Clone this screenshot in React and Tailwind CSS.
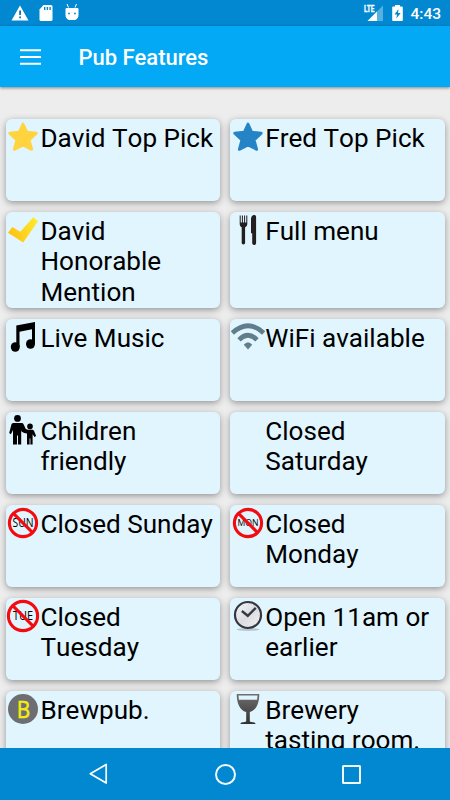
function TopPickStar({ color }) {
  return (
    <svg viewBox="0 0 30 30" className="h-[30px] w-[30px]">
      <path
        d="M15 2 L18.7 10.1 L28.3 11.2 L21.1 17.9 L23.7 27.4 L15 23.1 L6.3 27.4 L8.9 17.9 L1.7 11.2 L11.3 10.1 Z"
        fill={color}
        stroke={color}
        strokeWidth="2.8"
        strokeLinejoin="round"
      />
    </svg>
  )
}

function Check() {
  return (
    <svg viewBox="0 0 30 30" className="h-[30px] w-[30px]">
      <defs>
        <linearGradient id="check" x1="0" y1="0.6" x2="1" y2="0.3">
          <stop offset="0" stopColor="#fdc010" />
          <stop offset="1" stopColor="#ffe92f" />
        </linearGradient>
      </defs>
      <path d="M0 17.8 L4.3 12 L12.3 16.8 L25.3 2.2 L30 6.2 L15.2 27.5 Z" fill="url(#check)" />
    </svg>
  )
}

function Cutlery() {
  return (
    <svg viewBox="0 0 30 30" className="h-[30px] w-[30px]" fill="#231f20">
      <path d="M6.7.5h1v7h1.2v-7h1v7h1.2v-7h1v7h1.2v-7h1v8.6c0 1.6-.9 2.6-2.2 3.1v15.6c0 1-.8 1.7-1.7 1.7s-1.7-.7-1.7-1.7V12.2c-1.3-.5-2-1.5-2-3.1z" />
      <path d="M18 4c0-2.3 1.2-4 3.2-4 1.3 0 1.9.9 1.9 2v26c0 1.2-.8 2-1.9 2s-2-.8-2-2V18.2H18z" />
    </svg>
  )
}

function MusicNote() {
  return (
    <svg viewBox="0 0 30 30" className="h-[30px] w-[30px]">
      <path d="M8.3 3.5 L27 0 V22 H24 V7.2 L11.5 9.7 V25 H8.3 Z" />
      <ellipse cx="7.3" cy="25" rx="4.5" ry="4.8" />
      <ellipse cx="22.5" cy="22" rx="4.5" ry="4.8" />
    </svg>
  )
}

function Wifi() {
  return (
    <svg viewBox="0 0 34 30" className="-ml-0.5 h-[30px] w-[34px] max-w-none" fill="none" stroke="#607d8b" strokeWidth="4.7">
      <path d="M1.3 11 Q17 -3.6 32.7 11" />
      <path d="M8 17.8 Q17 8.9 26 17.8" />
      <path d="M12.8 22.8 Q17 17.8 21.2 22.8 L17 27.4 Z" fill="#607d8b" stroke="none" />
    </svg>
  )
}

function Family() {
  return (
    <svg viewBox="0 0 30 30" className="h-[30px] w-[30px]">
      <circle cx="9.5" cy="3.4" r="3.4" />
      <circle cx="22" cy="11.4" r="2.8" />
      <path d="M5.5 8h8c1.3 0 1.9.7 2.3 1.7l2 4.3 2.2.8h4c1.2 0 1.8.5 2.2 1.5l1.9 4.6-1.7 1-1.8-2.7V29.6h-2.2v-6h-.8v6h-2.6V18.5l-2.7-.6-2.5-1.2-.6-1.5V29.6H10v-9.2H9v9.2H5V15l-2.1 4.2L1.2 18l2-7.8C3.6 8.7 4.2 8 5.5 8z" />
    </svg>
  )
}

function ClosedDay({ day, large }) {
  const r = large ? 14.6 : 13.6
  const d = r * 0.707
  return (
    <svg viewBox="0 0 30 30" className="h-[30px] w-[30px] overflow-visible">
      <text
        x="15"
        y={day === 'MON' ? 18.2 : 18.8}
        textAnchor="middle"
        textLength={large ? 20 : 21}
        lengthAdjust="spacingAndGlyphs"
        className={day === 'MON' ? 'font-["Open_Sans",sans-serif] text-[9px]' : 'font-["Open_Sans",sans-serif] text-[12px]'}
      >
        {day}
      </text>
      <g fill="none" stroke="#f40b10" strokeWidth="3.1">
        <circle cx="15" cy="15" r={r} />
        <path d={`M${15 - d} ${15 - d} L${15 + d} ${15 + d}`} />
      </g>
    </svg>
  )
}

function Clock() {
  return (
    <svg viewBox="0 0 30 30" className="h-[30px] w-[30px] overflow-visible">
      <defs>
        <linearGradient id="face" x1="0" y1="0" x2="1" y2="1">
          <stop offset="0" stopColor="#fafafa" />
          <stop offset="0.5" stopColor="#dcdde0" />
          <stop offset="1" stopColor="#f4f4f5" />
        </linearGradient>
      </defs>
      <ellipse cx="15" cy="28.5" rx="11.5" ry="1.4" fill="#9fa9ae" opacity="0.6" />
      <circle cx="15" cy="14" r="13" fill="url(#face)" stroke="#343742" strokeWidth="2.2" />
      <circle cx="15" cy="14" r="10.5" fill="none" stroke="#b9bbc2" strokeWidth="0.7" strokeDasharray="0.8 4.7" />
      <path d="M8.8 10 L14.8 14.8 L22.8 6.8" fill="none" stroke="#343b45" strokeWidth="2.4" />
    </svg>
  )
}

function Brewpub() {
  return (
    <div className="flex h-[30px] w-[30px] items-center justify-center rounded-full bg-[#6d6e71] pl-px font-['Noto_Sans',sans-serif] text-[23px] leading-none text-[#f5ec13]">
      <span className="scale-x-90 [-webkit-text-stroke:0.4px_#f5ec13]">B</span>
    </div>
  )
}

function Goblet() {
  return (
    <svg viewBox="0 0 30 30" className="h-[30px] w-[30px]">
      <defs>
        <linearGradient id="goblet" x1="0" y1="0" x2="0" y2="1">
          <stop offset="0" stopColor="#707070" />
          <stop offset="1" stopColor="#303030" />
        </linearGradient>
      </defs>
      <path
        d="M3.7 0h22.6c0 9-3 16.5-9.5 18v9.6c2 .9 5.7.4 5.7 2.4h-15c0-2 3.7-1.5 5.7-2.4V18C6.7 16.5 3.7 9 3.7 0z M5.5 1.5l.4 4.3h18.2l.4-4.3z"
        fill="url(#goblet)"
        fillRule="evenodd"
      />
    </svg>
  )
}

const features = [
  { name: 'David Top Pick', icon: <TopPickStar color="#ffd43f" /> },
  { name: 'Fred Top Pick', icon: <TopPickStar color="#2484c6" /> },
  { name: 'David Honorable Mention', icon: <Check /> },
  { name: 'Full menu', icon: <Cutlery /> },
  { name: 'Live Music', icon: <MusicNote /> },
  { name: 'WiFi available', icon: <Wifi /> },
  { name: 'Children friendly', icon: <Family /> },
  { name: 'Closed Saturday', icon: null },
  { name: 'Closed Sunday', icon: <ClosedDay day="SUN" /> },
  { name: 'Closed Monday', icon: <ClosedDay day="MON" /> },
  { name: 'Closed Tuesday', icon: <ClosedDay day="TUE" large /> },
  { name: 'Open 11am or earlier', icon: <Clock /> },
  { name: 'Brewpub.', icon: <Brewpub /> },
  { name: 'Brewery tasting room.', icon: <Goblet /> },
]

function StatusBar() {
  return (
    <div className="flex h-[26px] shrink-0 items-center justify-between bg-[#0288d1] pr-[9px] pl-[11px] text-white">
      <div className="flex items-center gap-[11px]">
        <svg viewBox="0 0 18 16" className="h-4 w-[18px]">
          <path d="M9 0.5 L17.5 15.5 H0.5 Z" fill="#fff" />
          <path d="M8.2 5.5h1.8v4.5H8.2z M8.2 11.5h1.8v1.8H8.2z" fill="#0277bd" />
        </svg>
        <svg viewBox="0 0 14 16" className="h-4 w-3.5 -translate-x-px">
          <path d="M4.5 0H12q1.5 0 1.5 1.5V14.5q0 1.5-1.5 1.5H2Q.5 16 .5 14.5V4.5z" fill="#fff" />
          <path d="M5 2h1.4v3H5z M7.7 2h1.4v3H7.7z M10.4 2h1.4v3h-1.4z" fill="#0288d1" />
        </svg>
        <svg viewBox="0 0 16 16" className="h-4 w-4 -translate-x-px -translate-y-px">
          <path d="M2 4.5h12v6.5q0 4.5-4 4.5H6q-4 0-4-4.5z M3 0l1.5 3.5M12.5 0l-1.5 3.5" fill="#fff" stroke="#fff" />
          <circle cx="5" cy="9.5" r="0.9" fill="#0288d1" />
          <circle cx="11" cy="9.5" r="0.9" fill="#0288d1" />
        </svg>
      </div>
      <div className="flex items-center">
        <svg viewBox="0 0 20 16" className="h-4 w-5 overflow-visible">
          <path d="M19 0.5V16H3.5z" fill="#58b0e0" />
          <path d="M13 6.5V16H3.5z" fill="#fff" />
          <text x="0" y="7.2" textLength="10.5" lengthAdjust="spacingAndGlyphs" fill="#fff" stroke="#fff" strokeWidth="0.3" className="font-['Roboto',sans-serif] text-[9px] font-bold">
            LTE
          </text>
        </svg>
        <svg viewBox="0 0 11 16" className="ml-2 h-4 w-[11px]">
          <path d="M3 0h5v1.5h2q.8 0 .8.8V15.2q0 .8-.8.8H1q-.8 0-.8-.8V2.3q0-.8.8-.8h2z" fill="#fff" />
          <path d="M6.5 4 L2.5 9.5H5L4.3 13.5 L8.7 8H6z" fill="#0288d1" />
        </svg>
        <span className="ml-[7px] pt-0.5 text-[15.5px] leading-4 font-medium">4:43</span>
      </div>
    </div>
  )
}

function AppBar() {
  return (
    <header className="z-10 flex h-[61px] shrink-0 items-center bg-[#03a9f4] pl-5 text-white shadow-[0_1px_3px_rgba(0,0,0,0.45)]">
      <svg viewBox="0 0 21 16" className="h-4 w-[21px]">
        <path d="M0 1.3h21M0 8h21M0 14.8h21" stroke="#fff" strokeWidth="2" />
      </svg>
      <h1 className="pt-[3px] pl-[37.5px] text-[22px] leading-7 font-medium">Pub Features</h1>
    </header>
  )
}

function NavBar() {
  return (
    <nav className="flex h-[52px] shrink-0 items-center justify-between bg-[#0288d1] pr-[89px] pl-[88px]">
      <svg viewBox="0 0 22 24" className="h-6 w-[22px]">
        <path d="M18.2 2.5V21L2.3 11.8z" fill="none" stroke="#fff" strokeWidth="1.7" strokeLinejoin="round" />
      </svg>
      <div className="mr-0.5 h-[21px] w-[21px] rounded-full border-2 border-white/95" />
      <div className="h-[19px] w-[19px] rounded-[1.5px] border-2 border-white/95" />
    </nav>
  )
}

export default function App() {
  return (
    <div className="flex h-[800px] w-[450px] flex-col overflow-hidden bg-[#ededed] font-['Roboto',sans-serif]">
      <StatusBar />
      <AppBar />
      <main className="min-h-0 flex-1 overflow-hidden px-[5.5px] pt-8">
        <div className="grid grid-cols-2 gap-x-[10.5px] gap-y-[11px]">
          {features.map((feature) => (
            <div
              key={feature.name}
              className="flex min-h-[82px] items-start rounded-[6px] bg-[#e1f5fe] pt-[3px] pr-1 pl-[2.5px] shadow-[0_2px_7px_rgba(0,0,0,0.38)]"
            >
              <div className="h-[30px] w-[30px] shrink-0">{feature.icon}</div>
              <p className="pt-[0.8px] pb-px pl-[2.5px] text-[26.1px] leading-[30.4px] text-black [font-kerning:none]">
                {feature.name}
              </p>
            </div>
          ))}
        </div>
      </main>
      <NavBar />
    </div>
  )
}
